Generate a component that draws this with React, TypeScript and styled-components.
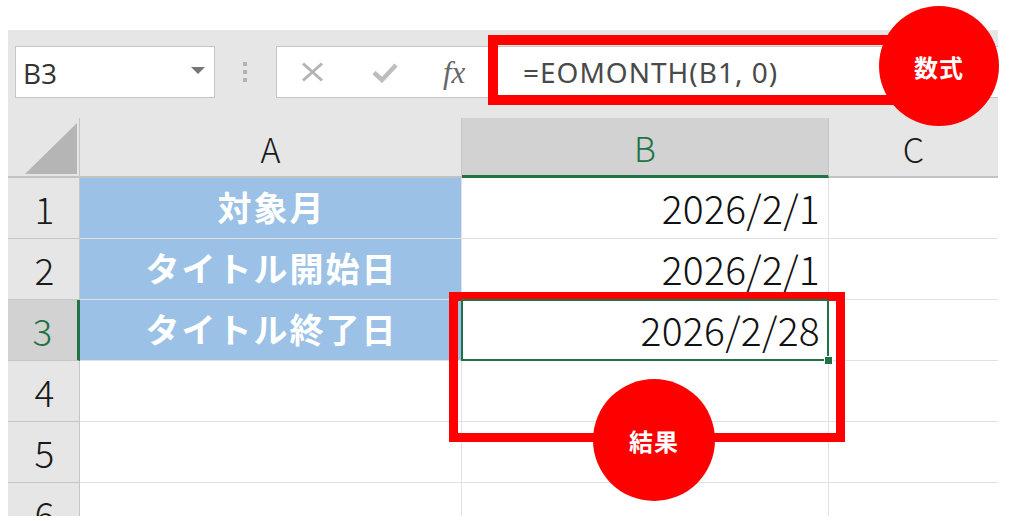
import React from 'react';
import styled, { createGlobalStyle } from 'styled-components';

const GRID = '#e1e1e1';
const HEAD_LINE = '#c6c6c6';
const GREEN = '#217346';
const RED = '#ff0000';
const BLUE = '#9bc2e6';

type Row = { n: number; label?: string; value?: string; selected?: boolean };

const rows: Row[] = [
  { n: 1, label: '対象月', value: '2026/2/1' },
  { n: 2, label: 'タイトル開始日', value: '2026/2/1' },
  { n: 3, label: 'タイトル終了日', value: '2026/2/28', selected: true },
  { n: 4 },
  { n: 5 },
  { n: 6 },
];

const columns = [
  { name: 'A', selected: false },
  { name: 'B', selected: true },
  { name: 'C', selected: false },
];

const App: React.FC = () => {
  return (
    <Page>
      <GlobalStyle />
      <Toolbar>
        <NameBox>
          <span>B3</span>
          <DropArrow />
        </NameBox>
        <Grip>
          <i />
          <i />
          <i />
        </Grip>
        <FormulaBox>
          <IconSlot>
            <svg width="23" height="20" viewBox="0 0 23 20">
              <path d="M2 1.5 L21 18.5 M21 1.5 L2 18.5" stroke="#b4b4b4" strokeWidth="3" fill="none" />
            </svg>
          </IconSlot>
          <IconSlot>
            <svg width="26" height="21" viewBox="0 0 26 21">
              <path d="M2 10.5 L10 18 L24 3" stroke="#bdbdbd" strokeWidth="4.5" fill="none" />
            </svg>
          </IconSlot>
          <IconSlot>
            <Fx>fx</Fx>
          </IconSlot>
          <Formula>=EOMONTH(B1, 0)</Formula>
        </FormulaBox>
      </Toolbar>

      <Sheet>
        <Corner>
          <svg width="72" height="60" viewBox="0 0 72 60">
            <polygon points="69,5 69,56 17,56" fill="#b5b5b5" />
          </svg>
        </Corner>
        {columns.map((c) => (
          <ColHeader key={c.name} $selected={c.selected}>
            {c.name}
          </ColHeader>
        ))}

        {rows.map((r) => (
          <React.Fragment key={r.n}>
            <RowHeader $selected={!!r.selected}>{r.n}</RowHeader>
            <LabelCell $filled={!!r.label}>{r.label}</LabelCell>
            <ValueCell $selected={!!r.selected}>
              {r.value}
              {r.selected && <FillHandle />}
            </ValueCell>
            <EmptyCell />
          </React.Fragment>
        ))}
      </Sheet>

      <Mark style={{ left: 488, top: 35, width: 480, height: 70 }} $thickness={10} />
      <Badge $x={879} $y={6} $size={120}>数式</Badge>

      <Mark style={{ left: 449, top: 292, width: 396, height: 150 }} $thickness={9} />
      <Badge $x={593} $y={379} $size={122}>結果</Badge>
    </Page>
  );
};

export default App;

const GlobalStyle = createGlobalStyle`
  html, body {
    margin: 0;
    padding: 0;
    background: #fff;
  }

  body {
    font-family: "Noto Sans CJK JP", "Noto Sans", sans-serif;
  }

  * {
    box-sizing: border-box;
  }
`;

const Page = styled.div`
  position: relative;
  width: 1024px;
  height: 521px;
  padding: 30px 26px 5px 8px;
  overflow: hidden;
  background: #fff;
`;

const Toolbar = styled.div`
  display: flex;
  align-items: flex-start;
  height: 88px;
  padding: 16px 0 0 7px;
  background: #e6e6e6;
`;

const NameBox = styled.div`
  display: flex;
  align-items: center;
  justify-content: space-between;
  width: 200px;
  height: 52px;
  padding: 2px 9px 0 7px;
  background: #fff;
  border: 1px solid ${HEAD_LINE};

  color: #333;
  font-family: "Open Sans", "Liberation Sans", sans-serif;
  font-size: 28px;
`;

const DropArrow = styled.span`
  width: 0;
  height: 0;
  margin-top: -6px;
  border-left: 7px solid transparent;
  border-right: 7px solid transparent;
  border-top: 7px solid #777;
`;

const Grip = styled.div`
  display: flex;
  flex-direction: column;
  gap: 4px;
  margin: 16px 0 0 28px;

  > i {
    display: block;
    width: 4px;
    height: 4px;
    background: #b3b3b3;
  }
`;

const FormulaBox = styled.div`
  display: flex;
  align-items: center;
  flex: 1;
  height: 52px;
  margin-left: 29px;
  padding-left: 24px;
  background: #fff;
  border: 1px solid ${HEAD_LINE};
  border-right: none;
`;

const IconSlot = styled.div`
  display: flex;
  align-items: center;
  width: 71px;
  height: 100%;
`;

const Fx = styled.span`
  color: #666;
  font-family: "Liberation Serif", "DejaVu Serif", serif;
  font-style: italic;
  font-size: 31px;
  line-height: 1;
`;

const Formula = styled.span`
  margin-left: 9px;
  color: #4a4a4a;
  font-family: "Noto Sans", sans-serif;
  font-size: 28px;
  letter-spacing: 1px;
`;

const Sheet = styled.div`
  display: grid;
  grid-template-columns: 72px 382px 367px 170px;
  grid-template-rows: 60px repeat(6, 61px);
  height: 398px;
  overflow: hidden;
  background: #fff;
`;

const Corner = styled.div`
  background: #e6e6e6;
  border-right: 1px solid ${HEAD_LINE};
  border-bottom: 2px solid #c3c3c3;

  > svg {
    display: block;
  }
`;

const ColHeader = styled.div<{ $selected: boolean }>`
  display: flex;
  align-items: center;
  justify-content: center;
  background: ${(p) => (p.$selected ? '#d2d2d2' : '#e6e6e6')};
  border-right: 1px solid ${HEAD_LINE};
  border-bottom: ${(p) => (p.$selected ? `3px solid ${GREEN}` : '2px solid #c3c3c3')};

  color: ${(p) => (p.$selected ? GREEN : '#1a1a1a')};
  font-size: 34px;
  font-weight: 300;
  padding-top: 2px;

  &:last-child {
    border-right: none;
  }
`;

const RowHeader = styled.div<{ $selected: boolean }>`
  display: flex;
  align-items: center;
  justify-content: center;
  background: ${(p) => (p.$selected ? '#d2d2d2' : '#e6e6e6')};
  border-right: ${(p) => (p.$selected ? `3px solid ${GREEN}` : `1px solid ${HEAD_LINE}`)};
  border-bottom: 1px solid ${HEAD_LINE};

  color: ${(p) => (p.$selected ? GREEN : '#1a1a1a')};
  font-size: 37px;
  font-weight: 300;
  padding-left: ${(p) => (p.$selected ? '0' : '2px')};
`;

const LabelCell = styled.div<{ $filled: boolean }>`
  display: flex;
  align-items: center;
  justify-content: center;
  background: ${(p) => (p.$filled ? BLUE : '#fff')};
  border-right: 1px solid ${GRID};
  border-bottom: 1px solid ${GRID};

  color: #fff;
  font-size: 34px;
  font-weight: 700;
  letter-spacing: 2px;
  padding-left: 2px;
  padding-bottom: 3px;
`;

const ValueCell = styled.div<{ $selected: boolean }>`
  position: relative;
  display: flex;
  align-items: center;
  justify-content: flex-end;
  padding: 0 8px 3px 0;
  border-right: 1px solid ${GRID};
  border-bottom: 1px solid ${GRID};

  color: #111;
  font-size: 39px;
  font-weight: 300;
  letter-spacing: 0.3px;

  &::after {
    content: '';
    display: ${(p) => (p.$selected ? 'block' : 'none')};
    position: absolute;
    inset: -1px -1px -1px -1px;
    border: 2px solid ${GREEN};
    z-index: 1;
  }
`;

const FillHandle = styled.span`
  position: absolute;
  right: -5px;
  bottom: -5px;
  width: 9px;
  height: 9px;
  background: ${GREEN};
  border: 1px solid #fff;
  z-index: 2;
`;

const EmptyCell = styled.div`
  border-bottom: 1px solid ${GRID};
`;

const Mark = styled.div<{ $thickness: number }>`
  position: absolute;
  border: ${(p) => p.$thickness}px solid ${RED};
`;

const Badge = styled.div<{ $x: number; $y: number; $size: number }>`
  position: absolute;
  left: ${(p) => p.$x}px;
  top: ${(p) => p.$y}px;
  width: ${(p) => p.$size}px;
  height: ${(p) => p.$size}px;
  display: flex;
  align-items: center;
  justify-content: center;
  border-radius: 50%;
  background: ${RED};

  color: #fff;
  font-size: 24px;
  font-weight: 700;
  letter-spacing: 1px;
`;
